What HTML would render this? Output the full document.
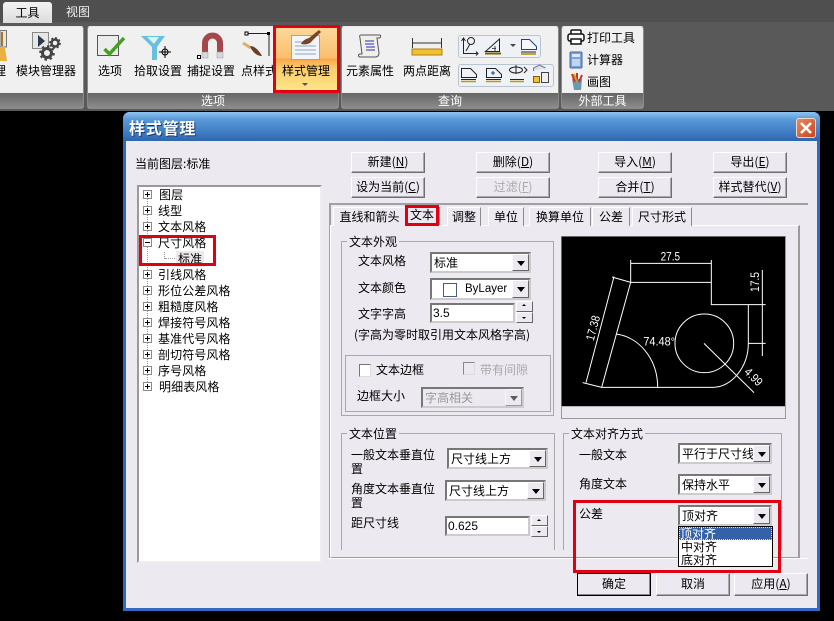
<!DOCTYPE html>
<html><head><meta charset="utf-8">
<style>
html,body{margin:0;padding:0;background:#000}
body{position:relative;width:834px;height:621px;overflow:hidden;font:12px/14px "WenQuanYi Zen Hei","Noto Sans CJK SC","Liberation Sans",sans-serif;color:#000}
.a,.a *{box-sizing:border-box}
.a{position:absolute;white-space:nowrap}
.panel{background:#f0f0f0;border-radius:3px;top:26px;height:83px;border:1px solid #8a8a8a;border-top-color:#e8e8e8;overflow:hidden}
.pbar{position:absolute;left:0;right:0;bottom:0;height:15px;background:linear-gradient(#666,#8c8c8c);color:#fff;text-align:center;line-height:15px}
.btn{background:#ece9f0;border:1px solid;border-color:#fff #6f6f6f #6f6f6f #fff;box-shadow:inset -1px -1px 0 #aca8b0;text-align:center;line-height:18px;height:21px;width:74px}
.gb{border:1px solid #a8a8a8}
.gl{background:#ece9f0;padding:0 2px;line-height:13px}
.cb{background:#fff;border:2px solid;border-color:#777 #ccc #ccc #777;height:21px;line-height:17px;padding-left:2px}
.ar{position:absolute;right:0;top:0;bottom:0;width:17px;background:#ece9f0;border:1px solid;border-color:#fff #666 #666 #fff}
.ar:after{content:"";position:absolute;left:4px;top:6px;border:4px solid transparent;border-top:5px solid #000;border-bottom:0}
.sp{background:#ece9f0;border:1px solid;border-color:#fff #666 #666 #fff;width:17px;height:11px}
.red{border:3px solid #e00010;z-index:5;background:transparent}
.tab{top:207px;height:19px;border:1px solid #fff;border-right-color:#8c8c8c;border-bottom:0;text-align:center;line-height:18px;background:#ece9f0}
.tr{left:171px;height:16px;line-height:16px;letter-spacing:.1px}
.pm{left:143px;width:9px;height:9px;border:1px solid #888;background:#fff}
.pm:before{content:"";position:absolute;left:1px;top:3px;width:5px;height:1px;background:#000}
.pm.p:after{content:"";position:absolute;left:3px;top:1px;width:1px;height:5px;background:#000}
.dot{left:147px;border-left:1px dotted #999;width:1px}
</style></head><body>

<!-- top band -->
<div class="a" style="left:0;top:0;width:834px;height:22px;background:#4f4f4f"></div>
<div class="a" style="left:0;top:22px;width:834px;height:89px;background:#595959"></div>
<div class="a" style="left:3px;top:2px;width:49px;height:21px;background:linear-gradient(#f4f4f4,#dcdcdc);border-radius:3px 3px 0 0;text-align:center;line-height:21px">工具</div>
<div class="a" style="left:66px;top:4px;color:#eee;line-height:16px">视图</div>

<!-- panel 1 -->
<div class="a panel" style="left:-4px;width:88px"><div class="pbar"></div></div>
<svg class="a" style="left:0;top:30px" width="8" height="32" viewBox="0 0 8 32"><path d="M0 .5h6.500V17H0z" fill="#ece4d4" stroke="#777"/><path d="M2 2v14" stroke="#a07830" stroke-width="2"/><path d="M0 18h5l2 13H0z" fill="#eab040"/></svg>
<div class="a" style="left:0;top:64px;width:6px;height:14px;overflow:hidden"><span class="a" style="right:0;top:0">理</span></div>
<div class="a" style="left:16px;top:64px;line-height:14px">模块管理器</div>
<svg class="a" style="left:31px;top:31px" width="30" height="30" viewBox="0 0 30 30"><rect x="1.500" y="1.500" width="16" height="16" fill="#e6e6e6" stroke="#888"/><path d="M7 4l7 6-7 6z" fill="#2c3a4a"/><circle cx="24" cy="12" r="3.500" fill="none" stroke="#444" stroke-width="2.500"/><circle cx="24" cy="12" r="5" fill="none" stroke="#444" stroke-width="1.800" stroke-dasharray="2 1.900"/><circle cx="16" cy="22" r="4.500" fill="none" stroke="#444" stroke-width="3"/><circle cx="16" cy="22" r="6.800" fill="none" stroke="#444" stroke-width="2" stroke-dasharray="2.500 2.800"/></svg>

<!-- panel 2 -->
<div class="a panel" style="left:87px;width:252px"><div class="pbar">选项</div></div>
<svg class="a" style="left:96px;top:34px" width="32" height="24" viewBox="0 0 32 24"><rect x="1.500" y="1.500" width="21" height="20" fill="#ececec" stroke="#555"/><path d="M8.500 15l5 5L28 4" fill="none" stroke="#46a020" stroke-width="3.500"/></svg>
<svg class="a" style="left:141px;top:35px" width="32" height="26" viewBox="0 0 32 26"><path d="M0 1h24l-8 11v13h-5V12z" fill="#68bfde"/><path d="M6 2h12l-5 7z" fill="#d8f2fa"/><circle cx="24" cy="17" r="3" fill="none" stroke="#000"/><path d="M24 11v12M18 17h12" stroke="#000"/></svg>
<svg class="a" style="left:196px;top:31px" width="30" height="30" viewBox="0 0 30 30"><path d="M9 21V12a7.500 7.500 0 0 1 15 0v9" fill="none" stroke="#a4474a" stroke-width="6"/><path d="M6 21h6v6H6zM21 21h6v6h-6z" fill="#d8d8d8" stroke="#999" stroke-width=".5"/><rect x="1.500" y="24.500" width="3" height="3" fill="#fff" stroke="#000"/></svg>
<svg class="a" style="left:242px;top:30px" width="30" height="30" viewBox="0 0 30 30"><path d="M4 3.500H27V26" fill="none" stroke="#222"/><rect x="3" y="2" width="3" height="3" fill="#fff" stroke="#000"/><rect x="25" y="2" width="3" height="3" fill="#000"/><path d="M1 13l8 5" stroke="#d8b070" stroke-width="3"/><path d="M8 16c4 0 8 3 12 10-5 0-10-4-12-10z" fill="#6a3e22"/></svg>
<div class="a" style="left:98px;top:64px">选项</div>
<div class="a" style="left:134px;top:64px">拾取设置</div>
<div class="a" style="left:187px;top:64px">捕捉设置</div>
<div class="a" style="left:241px;top:64px;width:32px;overflow:hidden">点样式</div>
<div class="a" style="left:276px;top:28px;width:61px;height:62px;background:linear-gradient(#fcd89a 0,#fbbf6d 48%,#f9a64a 50%,#fbcb6a 64%,#fde68a 100%)"></div>
<svg class="a" style="left:290px;top:28px;z-index:2" width="34" height="34" viewBox="0 0 34 34"><rect x="1.500" y="7.500" width="28" height="24" fill="#f3f5f8" stroke="#9aa"/><path d="M5 18h21M5 22h21M5 26h21" stroke="#89a8c8"/><path d="M5 14h8" stroke="#89a8c8"/><path d="M11 16c2-4 5-5 8-6l10-8 2 2-9 9c-2 3-6 4-11 3z" fill="#7a4525"/></svg>
<div class="a" style="left:282px;top:64px;z-index:2">样式管理</div>
<div class="a" style="left:302px;top:83px;border:3px solid transparent;border-top:3px solid #555;border-bottom:0;z-index:2"></div>
<div class="a red" style="left:273px;top:25px;width:67px;height:68px"></div>

<!-- panel 3 -->
<div class="a panel" style="left:341px;width:218px"><div class="pbar">查询</div></div>
<svg class="a" style="left:357px;top:33px" width="26" height="26" viewBox="0 0 26 26"><path d="M4 2h19c1 0 1 3-1 3H20l2 15c0 3-2 4-4 4H3c-2 0-2-3 0-3h2L3 5C2 3 3 2 4 2z" fill="#f0efe8" stroke="#555"/><path d="M8 8h9M8 11h9M9 14h9M9 17h9" stroke="#2a2ac0"/></svg>
<div class="a" style="left:346px;top:64px">元素属性</div>
<svg class="a" style="left:411px;top:37px" width="32" height="19" viewBox="0 0 32 19"><path d="M1.500 1v10M30.500 1v10M1.500 6h29" stroke="#333"/><rect x="1" y="12" width="30" height="6" fill="#f0c030" stroke="#b08010"/></svg>
<div class="a" style="left:403px;top:64px">两点距离</div>
<div class="a" style="left:458px;top:35px;width:83px;height:23px;border:1px solid #b8c4d4;border-radius:3px;background:#eef1f5"></div>
<div class="a" style="left:458px;top:64px;width:96px;height:23px;border:1px solid #b8c4d4;border-radius:3px;background:#eef1f5"></div>
<svg class="a" style="left:458px;top:35px" width="96" height="52" viewBox="0 0 96 52" fill="none" stroke="#222">
<path d="M5.500 3v15.500H20M3.500 6l2-3 2 3M18 16.500l2 2-2 2M8 16l4-7"/><circle cx="13" cy="6" r="3.500"/>
<path d="M27.500 16.500L41.500 4v12.500z"/><path d="M37 11v5M34 13.500h4" stroke-width=".8"/><path d="M27 18.500h16" stroke="#7a6400" stroke-width="2"/>
<path d="M52 9h6l-3 3z" fill="#444" stroke="none"/>
<path d="M63.500 4.500h8l7 7v3h-15z" stroke="#1b3f8a" fill="#f4f6fb"/><path d="M63 17h15" stroke="#222"/><path d="M63 19h15" stroke="#b08a00" stroke-width="1.500"/>
<path d="M3.500 42.500v-9h9l6 6v3z"/><path d="M3 44.500h15" stroke="#222"/><path d="M3 46.500h15" stroke="#c09a00" stroke-width="1.500"/>
<path d="M28.500 42.500v-9h9l6 6v3z"/><path d="M33 38h4M35 36v4" stroke="#1b3f8a"/><path d="M28 44.500h15" stroke="#222"/><path d="M28 46.500h15" stroke="#c09a00" stroke-width="1.500"/>
<ellipse cx="58" cy="35" rx="6.500" ry="3"/><path d="M58 30v9M66 32l3 3-3 3"/><path d="M52 44.500h14" stroke="#222"/><path d="M52 46.500h14" stroke="#c09a00" stroke-width="1.500"/>
<path d="M75.500 36v-3l6-3 6 3" stroke="#777" fill="#dde"/><rect x="75.500" y="41.500" width="6" height="6" fill="#f0c030" stroke="#806010"/><rect x="83.500" y="37.500" width="7" height="10" fill="#eee" stroke="#444"/>
</svg>

<!-- panel 4 -->
<div class="a panel" style="left:561px;width:83px"><div class="pbar">外部工具</div></div>
<svg class="a" style="left:567px;top:29px" width="18" height="16" viewBox="0 0 18 16" fill="#fff" stroke="#111" stroke-width="1.500"><rect x="4" y="1" width="10" height="6" rx="1"/><rect x="1" y="5" width="16" height="7" rx="2"/><rect x="4" y="10" width="10" height="5"/></svg>
<div class="a" style="left:587px;top:31px">打印工具</div>
<svg class="a" style="left:569px;top:51px" width="14" height="18" viewBox="0 0 14 18"><rect x="1" y="1" width="12" height="16" rx="1" fill="#7da0d8" stroke="#4a6aa0"/><rect x="3" y="3" width="8" height="3" fill="#dbe8f8"/><rect x="3" y="8" width="8" height="7" fill="#c0d4ee"/></svg>
<div class="a" style="left:587px;top:53px">计算器</div>
<svg class="a" style="left:569px;top:73px" width="16" height="18" viewBox="0 0 16 18"><path d="M3 6h10l-1 11H5z" fill="#6a9ab0"/><path d="M3 1l3 8M8 0v8M13 2l-3 7" stroke="#c83030" stroke-width="2"/><path d="M5 1l3 8" stroke="#d0a020" stroke-width="2"/></svg>
<div class="a" style="left:587px;top:75px">画图</div>

<!-- dialog -->
<div class="a" style="left:123px;top:112px;width:697px;height:499px;background:#ece9f0;border:1px solid #2a56a8;border-width:0 3px 3px 3px;border-radius:6px 6px 0 0;border-color:#3568c0"></div>
<div class="a" style="left:123px;top:112px;width:697px;height:29px;border-radius:7px 7px 0 0;background:linear-gradient(#8fc4f0 0,#5a9ad8 25%,#3f7cc4 70%,#2f66ae 100%)"></div>
<div class="a" style="left:129px;top:118px;color:#fff;font-size:16px;line-height:18px;font-weight:bold;letter-spacing:.8px;text-shadow:1px 1px 0 #1a3a70">样式管理</div>
<div class="a" style="left:796px;top:118px;width:20px;height:20px;border:1px solid #f4d8c8;border-radius:3px;background:linear-gradient(135deg,#e88a60,#c8441c)"></div>
<svg class="a" style="left:796px;top:118px" width="20" height="20"><path d="M5 5l10 10M15 5L5 15" stroke="#fff" stroke-width="2.600"/></svg>

<div class="a" style="left:135px;top:157px">当前图层:标准</div>
<div class="a btn" style="left:351px;top:152px">新建(<u>N</u>)</div>
<div class="a btn" style="left:351px;top:177px">设为当前(<u>C</u>)</div>
<div class="a btn" style="left:476px;top:152px">删除(<u>D</u>)</div>
<div class="a btn" style="left:476px;top:177px;color:#aaa">过滤(<u>F</u>)</div>
<div class="a btn" style="left:598px;top:152px">导入(<u>M</u>)</div>
<div class="a btn" style="left:598px;top:177px">合并(<u>T</u>)</div>
<div class="a btn" style="left:713px;top:152px">导出(<u>E</u>)</div>
<div class="a btn" style="left:713px;top:177px">样式替代(<u>V</u>)</div>

<!-- tree -->
<div class="a" style="left:137px;top:185px;width:185px;height:378px;background:#fff;border:2px solid;border-color:#9a9a9a #eee #eee #9a9a9a"></div>
<div class="a dot" style="top:192px;height:196px"></div>
<div class="a" style="left:164px;top:252px;height:7px;width:1px;border-left:1px dotted #999"></div>
<div class="a" style="left:165px;top:258px;width:12px;border-top:1px dotted #999;height:1px"></div>
<div class="a pm p" style="top:190px"></div><div class="a tr" style="top:187px;left:159px">图层</div>
<div class="a pm p" style="top:206px"></div><div class="a tr" style="top:203px;left:158px">线型</div>
<div class="a pm p" style="top:222px"></div><div class="a tr" style="top:219px;left:158px">文本风格</div>
<div class="a pm" style="top:238px"></div><div class="a tr" style="top:235px;left:158px">尺寸风格</div>
<div class="a tr" style="top:251px;left:176px;width:28px;padding-left:2px;background:#ece9e8">标准</div>
<div class="a pm p" style="top:270px"></div><div class="a tr" style="top:267px;left:158px">引线风格</div>
<div class="a pm p" style="top:286px"></div><div class="a tr" style="top:283px;left:158px">形位公差风格</div>
<div class="a pm p" style="top:302px"></div><div class="a tr" style="top:299px;left:158px">粗糙度风格</div>
<div class="a pm p" style="top:318px"></div><div class="a tr" style="top:315px;left:158px">焊接符号风格</div>
<div class="a pm p" style="top:334px"></div><div class="a tr" style="top:331px;left:158px">基准代号风格</div>
<div class="a pm p" style="top:350px"></div><div class="a tr" style="top:347px;left:158px">剖切符号风格</div>
<div class="a pm p" style="top:366px"></div><div class="a tr" style="top:363px;left:158px">序号风格</div>
<div class="a pm p" style="top:382px"></div><div class="a tr" style="top:379px;left:159px">明细表风格</div>
<div class="a red" style="left:139px;top:235px;width:77px;height:31px"></div>

<!-- tab control -->
<div class="a" style="left:329px;top:203px;width:479px;height:356px;border:2px solid #a0a0a0;border-width:2px 0 0 2px"></div>
<div class="a" style="left:330px;top:225px;width:470px;height:334px;border:2px solid #9c9c9c;border-top:1px solid #fff;border-left:1px solid #fff"></div>
<div class="a" style="left:328px;top:558px;width:480px;height:1px;background:#fff"></div>
<div class="a tab" style="left:333px;width:72px;border-right:0">直线和箭头</div>
<div class="a tab" style="left:405px;width:34px;top:205px;height:21px;z-index:1;border:0;line-height:20px">文本</div>
<div class="a tab" style="left:447px;width:34px;">调整</div>
<div class="a tab" style="left:488px;width:36px;">单位</div>
<div class="a tab" style="left:529px;width:62px;">换算单位</div>
<div class="a tab" style="left:592px;width:38px;">公差</div>
<div class="a tab" style="left:632px;width:60px;">尺寸形式</div>
<div class="a" style="left:439px;top:207px;width:1px;height:18px;background:#8c8c8c"></div>
<div class="a red" style="left:405px;top:205px;width:34px;height:21px"></div>

<!-- group 文本外观 -->
<div class="a gb" style="left:341px;top:241px;width:213px;height:175px"></div>
<div class="a gl" style="left:347px;top:235px">文本外观</div>
<div class="a" style="left:358px;top:254px">文本风格</div>
<div class="a cb" style="left:430px;top:252px;width:101px">标准<span class="ar"></span></div>
<div class="a" style="left:358px;top:281px">文本颜色</div>
<div class="a cb" style="left:430px;top:278px;width:101px;height:22px"><span class="a" style="left:11px;top:3px;width:14px;height:14px;border:1px solid #4a5a80"></span><span class="a" style="left:33px;top:1px;font-family:'Liberation Sans',sans-serif;font-size:11.500px">ByLayer</span><span class="ar"></span></div>
<div class="a" style="left:358px;top:307px">文字字高</div>
<div class="a cb" style="left:430px;top:303px;width:85px;height:20px;font-family:'Liberation Sans',sans-serif;line-height:16px;padding-left:1px">3.5</div>
<div class="a sp" style="left:516px;top:301px"></div><div class="a sp" style="left:516px;top:312px"></div>
<div class="a" style="left:522px;top:304px;border:2px solid transparent;border-bottom:2px solid #000;border-top:0"></div>
<div class="a" style="left:522px;top:317px;border:2px solid transparent;border-top:2px solid #000;border-bottom:0"></div>
<div class="a" style="left:354px;top:328px">(字高为零时取引用文本风格字高)</div>
<div class="a gb" style="left:345px;top:355px;width:206px;height:57px"></div>
<div class="a" style="left:359px;top:364px;width:12px;height:13px;background:#fff;border:1px solid;border-color:#777 #ddd #ddd #777"></div>
<div class="a" style="left:376px;top:361px;line-height:17px">文本边框</div>
<div class="a" style="left:463px;top:362px;width:12px;height:13px;border:1px solid;border-color:#888 #ddd #ddd #888"></div>
<div class="a" style="left:480px;top:361px;color:#aaa;line-height:17px">带有间隙</div>
<div class="a" style="left:357px;top:389px">边框大小</div>
<div class="a cb" style="left:421px;top:387px;width:103px;color:#999;background:#ece9f0">字高相关<span class="ar" style="opacity:.6"></span></div>

<!-- preview -->
<div class="a" style="left:561px;top:236px;width:225px;height:183px;border:1px solid #999;background:#ece9f0"></div>
<svg class="a" style="left:555px;top:230px" width="240" height="190" viewBox="0 0 720 570">
<rect x="20" y="20" width="670" height="508" fill="#000"/>
<rect x="20" y="528" width="670" height="2" fill="#999"/>
<g fill="none" stroke="#fff" stroke-width="3">
<path d="M227 90V157M469 90V224H632M227 100H469M227 157H469M171 141L227 157M140 472L227 157M177 140L93 458M83 458L140 472H475C530 472 580 410 580 340V224M580 340H632M622 120V378"/>
<circle cx="448" cy="340" r="88"/>
<path d="M183 312C250 320 308 385 308 472M447 340L597 488"/>
</g>
<g fill="#fff" font-family="Liberation Sans" font-size="36">
<text x="317" y="91" textLength="58" lengthAdjust="spacingAndGlyphs">27.5</text>
<text x="265" y="346" textLength="95" lengthAdjust="spacingAndGlyphs">74.48°</text>
<text transform="translate(612,186) rotate(-90)" textLength="60" lengthAdjust="spacingAndGlyphs">17.5</text>
<text transform="translate(116,334) rotate(-75)" textLength="76" lengthAdjust="spacingAndGlyphs">17.38</text>
<text transform="translate(566,428) rotate(45)" textLength="60" lengthAdjust="spacingAndGlyphs">4.99</text>
</g>
</svg>

<!-- group 文本位置 -->
<div class="a" style="left:341px;top:433px;width:214px;height:117px;border:1px solid #a8a8a8;border-bottom:0"></div>
<div class="a gl" style="left:347px;top:427px">文本位置</div>
<div class="a" style="left:351px;top:448px;width:92px;white-space:normal;line-height:14px;word-break:break-all">一般文本垂直位置</div>
<div class="a cb" style="left:447px;top:448px;width:101px">尺寸线上方<span class="ar"></span></div>
<div class="a" style="left:351px;top:482px;width:92px;white-space:normal;line-height:14px;word-break:break-all">角度文本垂直位置</div>
<div class="a cb" style="left:445px;top:480px;width:101px">尺寸线上方<span class="ar"></span></div>
<div class="a" style="left:351px;top:516px">距尺寸线</div>
<div class="a cb" style="left:445px;top:516px;width:85px;height:20px;font-family:'Liberation Sans',sans-serif;line-height:16px;padding-left:1px">0.625</div>
<div class="a sp" style="left:531px;top:515px"></div><div class="a sp" style="left:531px;top:526px"></div>
<div class="a" style="left:537px;top:519px;border:2px solid transparent;border-bottom:2px solid #000;border-top:0"></div>
<div class="a" style="left:537px;top:531px;border:2px solid transparent;border-top:2px solid #000;border-bottom:0"></div>

<!-- group 文本对齐方式 -->
<div class="a" style="left:563px;top:433px;width:219px;height:117px;border:1px solid #a8a8a8;border-bottom:0"></div>
<div class="a gl" style="left:569px;top:427px">文本对齐方式</div>
<div class="a" style="left:579px;top:448px">一般文本</div>
<div class="a cb" style="left:678px;top:443px;width:94px;overflow:hidden">平行于尺寸线<span class="ar"></span></div>
<div class="a" style="left:579px;top:477px">角度文本</div>
<div class="a cb" style="left:678px;top:474px;width:94px">保持水平<span class="ar"></span></div>
<div class="a" style="left:579px;top:507px">公差</div>
<div class="a cb" style="left:678px;top:505px;width:94px">顶对齐<span class="ar"></span></div>
<div class="a" style="left:678px;top:526px;width:95px;height:41px;background:#fff;border:1px solid #000">
 <div style="height:13px;line-height:13px;background:#3461aa;color:#fff;padding-left:1px;outline:1px dotted #ddd;outline-offset:-1px">顶对齐</div>
 <div style="height:13px;line-height:13px;padding-left:2px">中对齐</div>
 <div style="height:13px;line-height:13px;padding-left:2px">底对齐</div>
</div>
<div class="a red" style="left:573px;top:500px;width:208px;height:73px"></div>

<!-- bottom buttons -->
<div class="a btn" style="left:577px;top:573px;width:74px;height:23px;line-height:20px;border:1px solid #000;box-shadow:inset -1px -1px 0 #888;z-index:6">确定</div>
<div class="a btn" style="left:656px;top:573px;width:74px;height:23px;line-height:20px">取消</div>
<div class="a btn" style="left:734px;top:573px;width:74px;height:23px;line-height:20px">应用(<u>A</u>)</div>
</body></html>
